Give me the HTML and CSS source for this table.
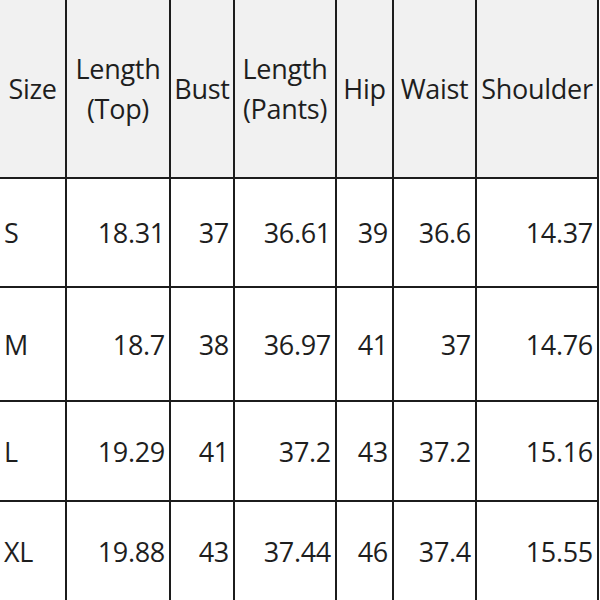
FILE: index.html
```html
<!DOCTYPE html>
<html>
<head>
<meta charset="utf-8">
<link rel="stylesheet" href="styles.css">
</head>
<body>
<div class="sheet">
  <div class="cell head">Size</div>
  <div class="cell head">Length<br>(Top)</div>
  <div class="cell head">Bust</div>
  <div class="cell head">Length<br>(Pants)</div>
  <div class="cell head">Hip</div>
  <div class="cell head">Waist</div>
  <div class="cell head">Shoulder</div>

  <div class="cell label">S</div>
  <div class="cell num">18.31</div>
  <div class="cell num">37</div>
  <div class="cell num">36.61</div>
  <div class="cell num">39</div>
  <div class="cell num">36.6</div>
  <div class="cell num">14.37</div>

  <div class="cell label">M</div>
  <div class="cell num">18.7</div>
  <div class="cell num">38</div>
  <div class="cell num">36.97</div>
  <div class="cell num">41</div>
  <div class="cell num">37</div>
  <div class="cell num">14.76</div>

  <div class="cell label">L</div>
  <div class="cell num">19.29</div>
  <div class="cell num">41</div>
  <div class="cell num">37.2</div>
  <div class="cell num">43</div>
  <div class="cell num">37.2</div>
  <div class="cell num">15.16</div>

  <div class="cell label">XL</div>
  <div class="cell num">19.88</div>
  <div class="cell num">43</div>
  <div class="cell num">37.44</div>
  <div class="cell num">46</div>
  <div class="cell num">37.4</div>
  <div class="cell num">15.55</div>
</div>
</body>
</html>
```
FILE: styles.css
```css
html, body {
  margin: 0;
  padding: 0;
  background: #ffffff;
  overflow: hidden;
}

.sheet {
  display: grid;
  grid-template-columns: 65px 102px 62px 100px 55px 81px 120px;
  grid-template-rows: 177px 107px 112px 98px 98px;
  gap: 2px;
  padding-right: 2px;
  width: max-content;
  background: #1c1c1c;
  font-family: "Open Sans", "Noto Sans", sans-serif;
  font-size: 27px;
  color: #1e1e1e;
}

.cell {
  background: #ffffff;
  display: flex;
  align-items: center;
  padding: 0 4px;
  white-space: nowrap;
  letter-spacing: -0.3px;
}

.head {
  background: #f1f1f1;
  justify-content: center;
  text-align: center;
  line-height: 40px;
  padding: 0;
}

.label {
  justify-content: flex-start;
}

.num {
  justify-content: flex-end;
}
```
